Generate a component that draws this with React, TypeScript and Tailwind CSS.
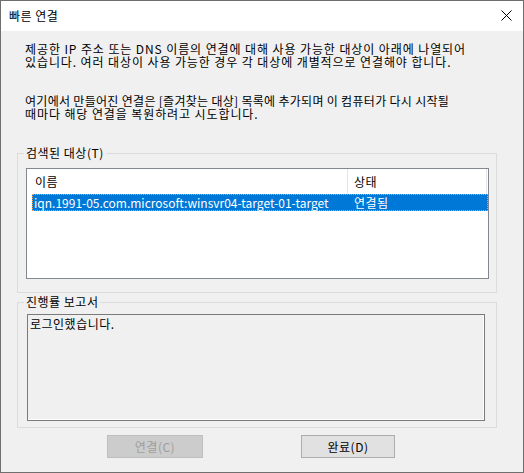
import React from 'react';

const KR = "font-['Noto_Sans_CJK_KR','Malgun_Gothic',sans-serif]";

const App: React.FC = () => {
  return (
    <div className={`w-[524px] h-[473px] border border-[#6f6f6f] bg-[#f0f0f0] flex flex-col text-[12px] text-black ${KR}`}>
      {/* Title bar */}
      <div className="h-[30px] bg-white flex items-center justify-between pl-[8px] pr-[11px]">
        <span className="leading-[12px] tracking-[0.5px]">빠른 연결</span>
        <svg width="11" height="11" viewBox="0 0 11 11" className="mb-[1px]">
          <path d="M0.5 0.5 L10.5 10.5 M10.5 0.5 L0.5 10.5" stroke="#000" strokeWidth="1" fill="none" />
        </svg>
      </div>

      <div className="flex-1 flex flex-col pt-[11px]">
        <div className="px-[24px] whitespace-nowrap tracking-[0.9px]">
          <div className="h-[13px] leading-[13px]">제공한 IP 주소 또는 DNS 이름의 연결에 대해 사용 가능한 대상이 아래에 나열되어</div>
          <div className="h-[13px] leading-[13px]">있습니다. 여러 대상이 사용 가능한 경우 각 대상에 개별적으로 연결해야 합니다.</div>
        </div>
        <div className="px-[24px] mt-[26px] whitespace-nowrap">
          <div className="h-[13px] leading-[13px] tracking-[0.3px]">여기에서 만들어진 연결은 [즐겨찾는 대상] 목록에 추가되며 이 컴퓨터가 다시 시작될</div>
          <div className="h-[13px] leading-[13px] tracking-[0.9px]">때마다 해당 연결을 복원하려고 시도합니다.</div>
        </div>

        {/* Discovered targets */}
        <fieldset className="mx-[16px] mt-[27px] w-[480px] border border-[#dcdcdc] pl-[8px] pr-[7px] pt-[9px] pb-[13px]">
          <legend className="-ml-[2px] px-[2px] leading-[12px] tracking-[0.5px]">검색된 대상(T)</legend>
          <div className="w-[463px] h-[111px] border border-[#828790] bg-white">
            <div className="h-[25px] flex tracking-[0.5px]">
              <div className="w-[320px] pl-[8px] flex items-center">이름</div>
              <div className="w-px bg-[#e5e5e5]" />
              <div className="w-[138px] pl-[6px] flex items-center">상태</div>
              <div className="w-px bg-[#e5e5e5]" />
            </div>
            <div className="ml-[5px] w-[456px] h-[17px] bg-[#0078d7] border border-dotted border-[#f5a34c] flex items-center text-white pl-[1px] whitespace-nowrap">
              <span className="w-[320px]">iqn.1991-05.com.microsoft:winsvr04-target-01-target</span>
              <span className="tracking-[0.5px]">연결됨</span>
            </div>
          </div>
        </fieldset>

        {/* Progress report */}
        <fieldset className="mx-[16px] mt-[3px] w-[480px] border border-[#dcdcdc] pl-[9px] pr-[11px] pt-[6px] pb-[6px]">
          <legend className="-ml-[3px] px-[2px] leading-[12px] tracking-[0.5px]">진행률 보고서</legend>
          <div className="w-[458px] h-[107px] border border-[#7a7a7a] bg-[#f0f0f0] shadow-[inset_-1px_-1px_0_#ffffff] pl-[2px] pt-[2px] leading-[13px] tracking-[0.5px]">
            로그인했습니다.
          </div>
        </fieldset>

        {/* Buttons */}
        <div className="mt-[7px] flex pl-[106px] gap-[98px]">
          <button className="w-[96px] h-[23px] bg-[#cccccc] border border-[#bfbfbf] text-[#9d9d9d] leading-[12px] tracking-[0.5px]">
            연결(C)
          </button>
          <button className="w-[94px] h-[23px] bg-[#e1e1e1] border border-[#adadad] leading-[12px] tracking-[0.5px]">
            완료(D)
          </button>
        </div>
      </div>
    </div>
  );
};

export default App;
